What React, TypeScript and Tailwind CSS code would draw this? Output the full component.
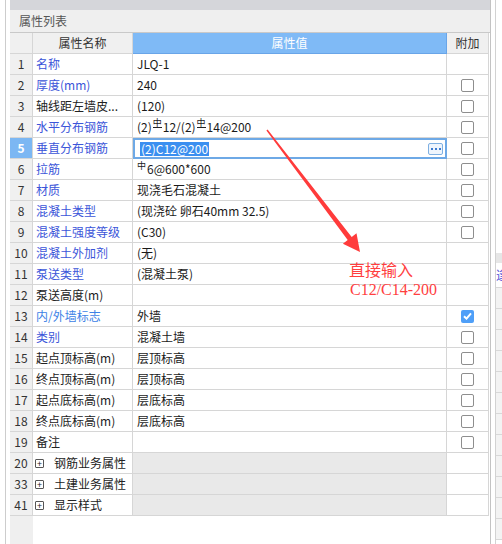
import type { ReactNode } from "react";

type Check = "none" | "off" | "on";

type Row = {
  n: number;
  name: string;
  tone?: "blue" | "sky";
  value?: ReactNode;
  check?: Check;
  group?: boolean;
  selected?: boolean;
};

// rebar grade marks (HPB300 / HRB400) as they show in the property grid
function Rebar({ bar = false }: { bar?: boolean }) {
  return (
    <span
      className={
        bar
          ? "relative -top-[4px] mx-[1px] inline-block border-b border-[#222] text-[9px] leading-[8px]"
          : "relative -top-[3px] mr-[1px] inline-block text-[9px] leading-[8px]"
      }
    >
      中
    </span>
  );
}

const rows: Row[] = [
  { n: 1, name: "名称", tone: "blue", value: "JLQ-1", check: "none" },
  { n: 2, name: "厚度(mm)", tone: "blue", value: "240", check: "off" },
  { n: 3, name: "轴线距左墙皮...", value: "(120)", check: "off" },
  {
    n: 4,
    name: "水平分布钢筋",
    tone: "blue",
    value: (
      <>
        (2)
        <Rebar bar />
        12/(2)
        <Rebar bar />
        14@200
      </>
    ),
    check: "off",
  },
  { n: 5, name: "垂直分布钢筋", tone: "blue", value: "(2)C12@200", check: "off", selected: true },
  {
    n: 6,
    name: "拉筋",
    tone: "blue",
    value: (
      <>
        <Rebar />
        6@600*600
      </>
    ),
    check: "off",
  },
  { n: 7, name: "材质", tone: "blue", value: "现浇毛石混凝土", check: "off" },
  { n: 8, name: "混凝土类型", tone: "blue", value: "(现浇砼 卵石40mm 32.5)", check: "off" },
  { n: 9, name: "混凝土强度等级", tone: "blue", value: "(C30)", check: "off" },
  { n: 10, name: "混凝土外加剂", tone: "blue", value: "(无)", check: "none" },
  { n: 11, name: "泵送类型", tone: "blue", value: "(混凝土泵)", check: "none" },
  { n: 12, name: "泵送高度(m)", value: "", check: "none" },
  { n: 13, name: "内/外墙标志", tone: "sky", value: "外墙", check: "on" },
  { n: 14, name: "类别", tone: "blue", value: "混凝土墙", check: "off" },
  { n: 15, name: "起点顶标高(m)", value: "层顶标高", check: "off" },
  { n: 16, name: "终点顶标高(m)", value: "层顶标高", check: "off" },
  { n: 17, name: "起点底标高(m)", value: "层底标高", check: "off" },
  { n: 18, name: "终点底标高(m)", value: "层底标高", check: "off" },
  { n: 19, name: "备注", value: "", check: "off" },
  { n: 20, name: "钢筋业务属性", group: true },
  { n: 33, name: "土建业务属性", group: true },
  { n: 41, name: "显示样式", group: true },
];

function CheckBox({ state }: { state: Check }) {
  if (state === "none") return null;
  if (state === "on")
    return (
      <span className="flex h-[13px] w-[13px] items-center justify-center rounded-[2px] bg-[#4f9ff8]">
        <svg width="9" height="8" viewBox="0 0 9 8">
          <path d="M1 4.2 L3.5 6.6 L8 1.4" fill="none" stroke="#fff" strokeWidth="2" />
        </svg>
      </span>
    );
  return <span className="h-[13px] w-[13px] rounded-[2px] border-[1.5px] border-[#8e8e8e] bg-white" />;
}

function GridRow({ row }: { row: Row }) {
  const nameColor =
    row.tone === "blue" ? "text-[#3b55d9]" : row.tone === "sky" ? "text-[#3d82e6]" : "text-[#222]";
  return (
    <div className="grid h-[21px] shrink-0 grid-cols-[23px_100px_314px_42px]">
      <div
        className={
          row.selected
            ? "flex items-center justify-center border-r border-b border-[#d6d6d6] bg-[#7cb7f3] font-bold text-white"
            : "flex items-center justify-center border-r border-b border-[#d6d6d6] bg-[#f0f0f0] text-[#333]"
        }
      >
        {row.n}
      </div>
      {row.group ? (
        <div className="flex items-center gap-[10px] border-r border-b border-[#d6d6d6] pl-[2px] text-[#222]">
          <span className="flex h-[9px] w-[9px] items-center justify-center rounded-[1px] border border-[#555] text-[9px] leading-none">
            +
          </span>
          <span>{row.name}</span>
        </div>
      ) : (
        <div className={`flex items-center overflow-hidden whitespace-nowrap border-r border-b border-[#d6d6d6] pl-[3px] ${nameColor}`}>
          {row.name}
        </div>
      )}
      {row.group ? (
        <div className="border-r border-b border-[#d6d6d6] bg-[#e9e9e9]" />
      ) : row.selected ? (
        <div className="flex items-center justify-between border-2 border-[#6ea9e6] pl-[5px] pr-[2px]">
          <span className="bg-[#3b8ff0] px-[1px] leading-[14px] text-white">{row.value}</span>
          <span className="flex h-[12px] w-[15px] items-center justify-center gap-[2px] rounded-[2px] border border-[#7fb0e2] bg-[#eef5fd]">
            <span className="h-[2px] w-[2px] bg-[#3d7bd0]" />
            <span className="h-[2px] w-[2px] bg-[#3d7bd0]" />
            <span className="h-[2px] w-[2px] bg-[#3d7bd0]" />
          </span>
        </div>
      ) : (
        <div className="flex items-center whitespace-nowrap border-r border-b border-[#d6d6d6] pl-[4px] text-[#1a1a1a]">
          {row.value}
        </div>
      )}
      <div className="flex items-center justify-center border-r border-b border-[#d6d6d6] bg-white">
        <CheckBox state={row.check ?? "none"} />
      </div>
    </div>
  );
}

export default function App() {
  return (
    <div className="relative flex h-[544px] w-[502px] overflow-hidden bg-white font-['Noto_Sans_CJK_SC','Noto_Sans',sans-serif] text-[12px]">
      <div className="w-[5px] shrink-0" />
      <div className="w-px shrink-0 bg-[#cdcdcd]" />
      <div className="w-[4px] shrink-0" />

      <div className="flex w-[480px] shrink-0 flex-col">
        <div className="h-[10px] shrink-0 bg-[#d5d6da]" />
        <div className="flex h-[23px] shrink-0 items-center border-b border-[#c9c9c9] bg-[#efefef] pl-[9px] text-[#555]">
          属性列表
        </div>

        <div className="grid h-[21px] shrink-0 grid-cols-[23px_100px_314px_42px] text-[#333]">
          <div className="border-r border-b border-[#d6d6d6] bg-[#f0f0f0]" />
          <div className="flex items-center justify-center border-r border-b border-[#d6d6d6] bg-[#f0f0f0]">
            属性名称
          </div>
          <div className="flex items-center justify-center border-r border-b border-[#69a5e8] bg-[#7fbaf6] text-white">
            属性值
          </div>
          <div className="flex items-center justify-center border-r border-b border-[#d6d6d6] bg-[#f0f0f0]">
            附加
          </div>
        </div>

        {rows.map((r) => (
          <GridRow key={r.n} row={r} />
        ))}

        <div className="flex flex-1">
          <div className="w-[23px] bg-[#efefef]" />
        </div>
      </div>

      <div className="w-px shrink-0 bg-[#c3c3c3]" />
      <div className="w-[4px] shrink-0" />
      <div className="w-px shrink-0 bg-[#d2d2d2]" />

      {/* neighbouring panel, mostly cut off */}
      <div className="flex min-w-0 flex-1 flex-col overflow-hidden pt-[253px]">
        <div className="h-[10px] shrink-0 bg-[#e6e6e6]" />
        <div className="h-[25px] shrink-0 overflow-hidden whitespace-nowrap border-b border-[#d8d8d8] pt-[3px] text-[#4a4ad8]">
          逢
        </div>
        {Array.from({ length: 12 }).map((_, i) => (
          <div key={i} className="h-[21px] shrink-0 border-b border-[#d8d8d8] bg-[#f3f3f3]" />
        ))}
      </div>

      {/* red annotation */}
      <svg className="pointer-events-none absolute left-0 top-0" width="502" height="544" viewBox="0 0 502 544">
        <polygon
          points="267.6,129.5 351.7,237 356.5,233.3 360,252 342.9,243.7 347.7,240 266.4,130.5"
          fill="#ff3b3b"
        />
      </svg>
      <div className="absolute left-[349px] top-[259px] text-[16px] leading-[20px] text-[#ff3f3f]">直接输入</div>
      <div className="absolute left-[350px] top-[280px] font-['Liberation_Serif',serif] text-[16px] leading-[20px] text-[#ff3f3f]">
        C12/C14-200
      </div>
    </div>
  );
}
